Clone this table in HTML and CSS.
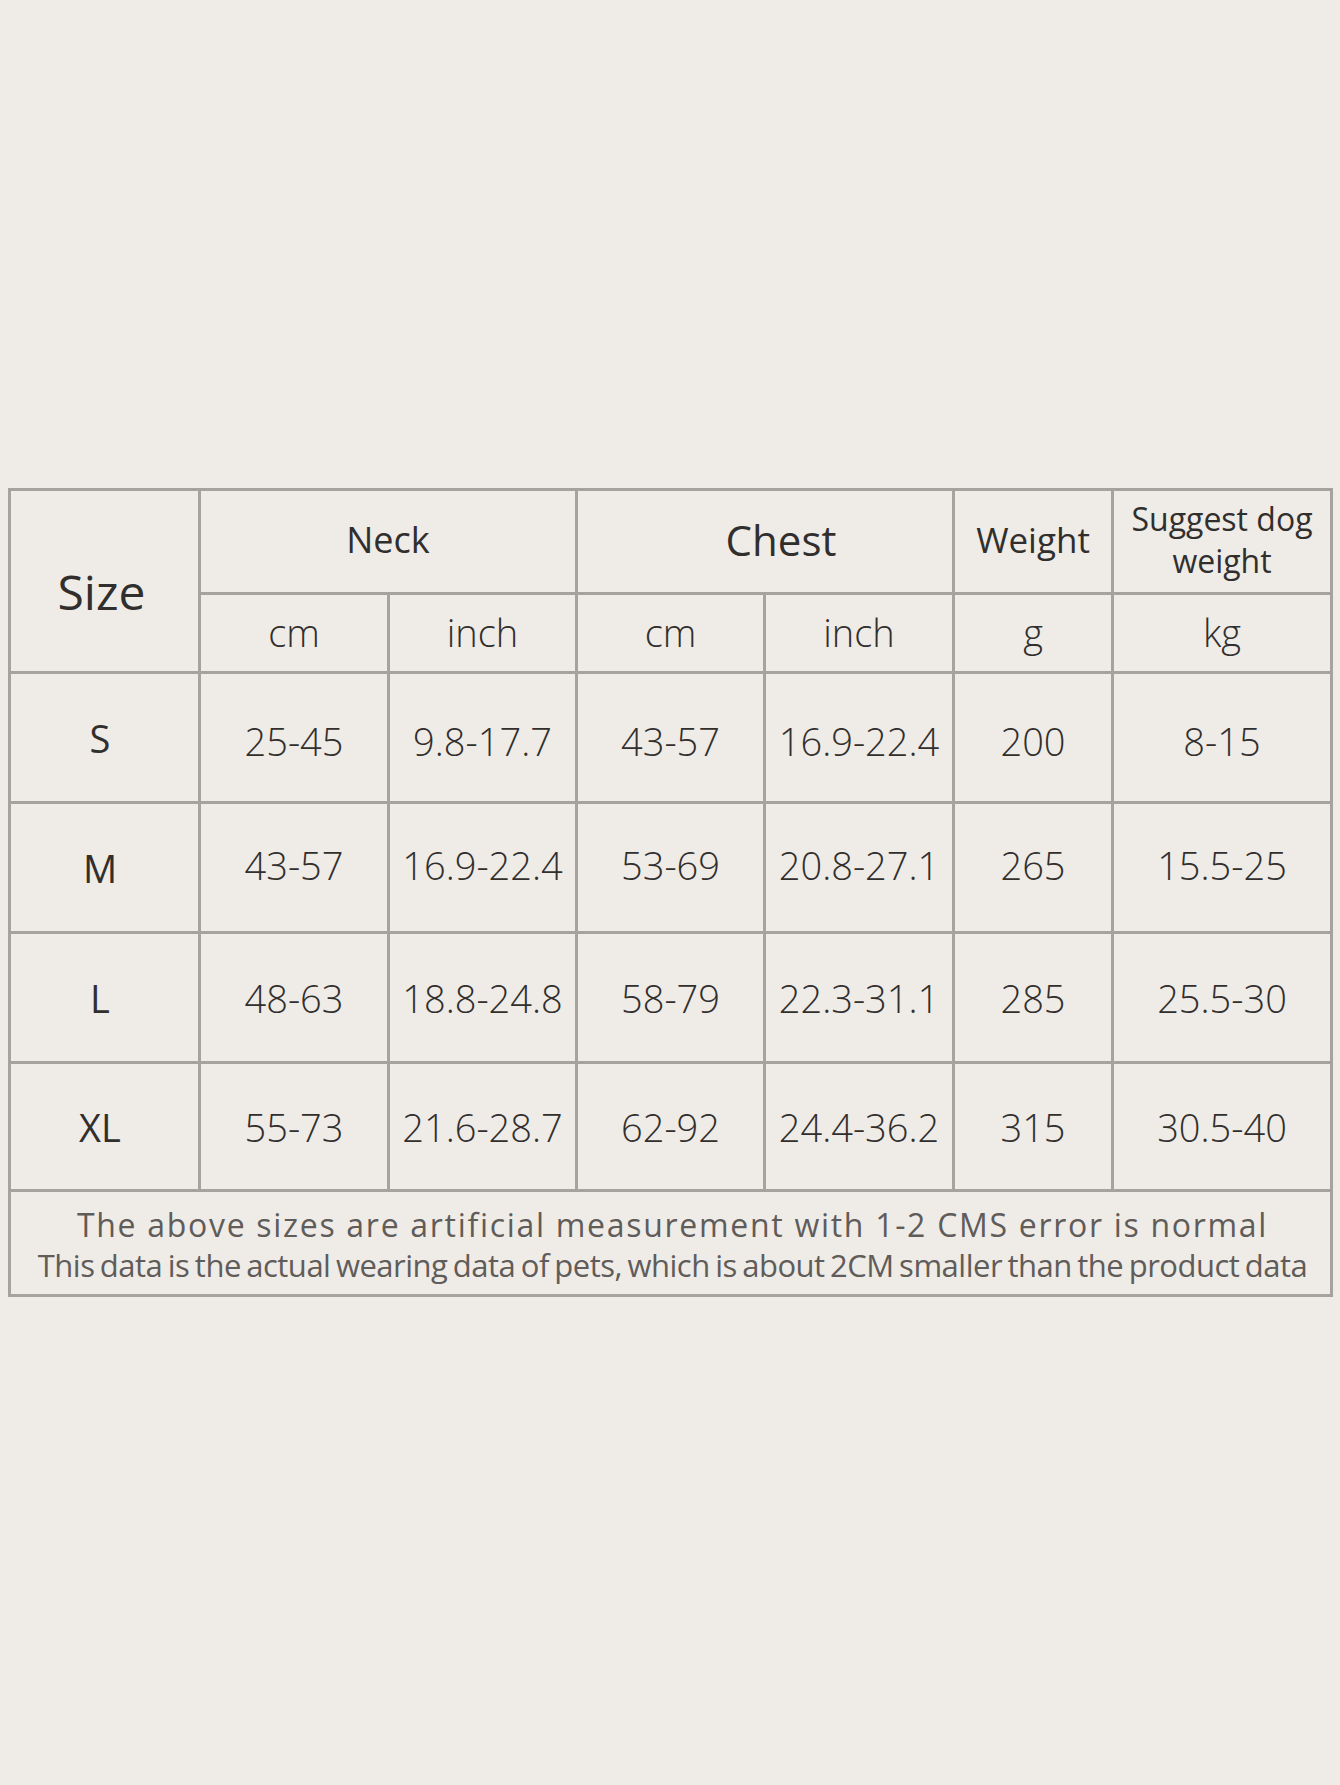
FILE: index.html
```html
<!DOCTYPE html>
<html lang="en">
<head>
<meta charset="utf-8">
<title>Size chart</title>
<link rel="stylesheet" href="styles.css">
</head>
<body>
<div class="chart">
  <div class="cell head-size">Size</div>
  <div class="cell head head-neck">Neck</div>
  <div class="cell head head-chest">Chest</div>
  <div class="cell head head-weight">Weight</div>
  <div class="cell head head-suggest">Suggest dog<br>weight</div>

  <div class="cell unit">cm</div>
  <div class="cell unit">inch</div>
  <div class="cell unit">cm</div>
  <div class="cell unit">inch</div>
  <div class="cell unit">g</div>
  <div class="cell unit">kg</div>

  <div class="cell label">S</div>
  <div class="cell data row-s">25-45</div>
  <div class="cell data row-s">9.8-17.7</div>
  <div class="cell data row-s">43-57</div>
  <div class="cell data row-s">16.9-22.4</div>
  <div class="cell data row-s">200</div>
  <div class="cell data row-s">8-15</div>

  <div class="cell label">M</div>
  <div class="cell data row-m">43-57</div>
  <div class="cell data row-m">16.9-22.4</div>
  <div class="cell data row-m">53-69</div>
  <div class="cell data row-m">20.8-27.1</div>
  <div class="cell data row-m">265</div>
  <div class="cell data row-m">15.5-25</div>

  <div class="cell label">L</div>
  <div class="cell data">48-63</div>
  <div class="cell data">18.8-24.8</div>
  <div class="cell data">58-79</div>
  <div class="cell data">22.3-31.1</div>
  <div class="cell data">285</div>
  <div class="cell data">25.5-30</div>

  <div class="cell label">XL</div>
  <div class="cell data">55-73</div>
  <div class="cell data">21.6-28.7</div>
  <div class="cell data">62-92</div>
  <div class="cell data">24.4-36.2</div>
  <div class="cell data">315</div>
  <div class="cell data">30.5-40</div>

  <div class="cell note">
    <p class="note-1">The above sizes are artificial measurement with 1-2 CMS error is normal</p>
    <p class="note-2">This data is the actual wearing data of pets, which is about 2CM smaller than the product data</p>
  </div>
</div>
</body>
</html>
```

FILE: styles.css
```css
html, body {
  margin: 0;
  padding: 0;
  background: #efebe7;
}

body {
  width: 1340px;
  height: 1785px;
  padding: 488px 0 0 8px;
  box-sizing: border-box;
  font-family: "Open Sans", "Noto Sans", sans-serif;
  color: #312f2d;
}

.chart {
  display: grid;
  width: 1325px;
  box-sizing: border-box;
  grid-template-columns: 187px 186px 185px 185px 186px 156px 216px;
  grid-template-rows: 101px 76px 127px 127px 127px 125px 102px;
  gap: 3px;
  padding: 3px;
  background: #a6a39f;
}

.cell {
  background: #efebe7;
  display: flex;
  align-items: center;
  justify-content: center;
  text-align: center;
  white-space: nowrap;
  box-sizing: border-box;
}

.head-size {
  grid-row: 1 / span 2;
  font-size: 48px;
  padding: 20px 6px 0 0;
}

.head {
  padding-bottom: 4px;
}

.head-neck {
  grid-column: 2 / span 2;
  font-size: 36px;
}

.head-chest {
  grid-column: 4 / span 2;
  font-size: 42px;
  padding-left: 32px;
}

.head-weight {
  font-size: 35px;
}

.head-suggest {
  font-size: 32px;
  line-height: 42px;
  padding-bottom: 4px;
}

.unit {
  font-size: 38px;
  font-weight: 300;
  padding-bottom: 2px;
}

.label {
  font-size: 38px;
  font-weight: 400;
  padding-right: 9px;
}

.data {
  font-size: 38px;
  font-weight: 300;
}

.row-s {
  padding-top: 6px;
}

.row-m {
  padding-bottom: 6px;
}

.note {
  grid-column: 1 / -1;
  flex-direction: column;
  color: #5f5c59;
  padding-top: 4px;
  padding-left: 4px;
}

.note p {
  margin: 0;
  line-height: 40px;
}

.note-1 {
  font-size: 32px;
  letter-spacing: 1.7px;
}

.note-2 {
  font-size: 31px;
  letter-spacing: -0.5px;
  word-spacing: -2.1px;
}
```
